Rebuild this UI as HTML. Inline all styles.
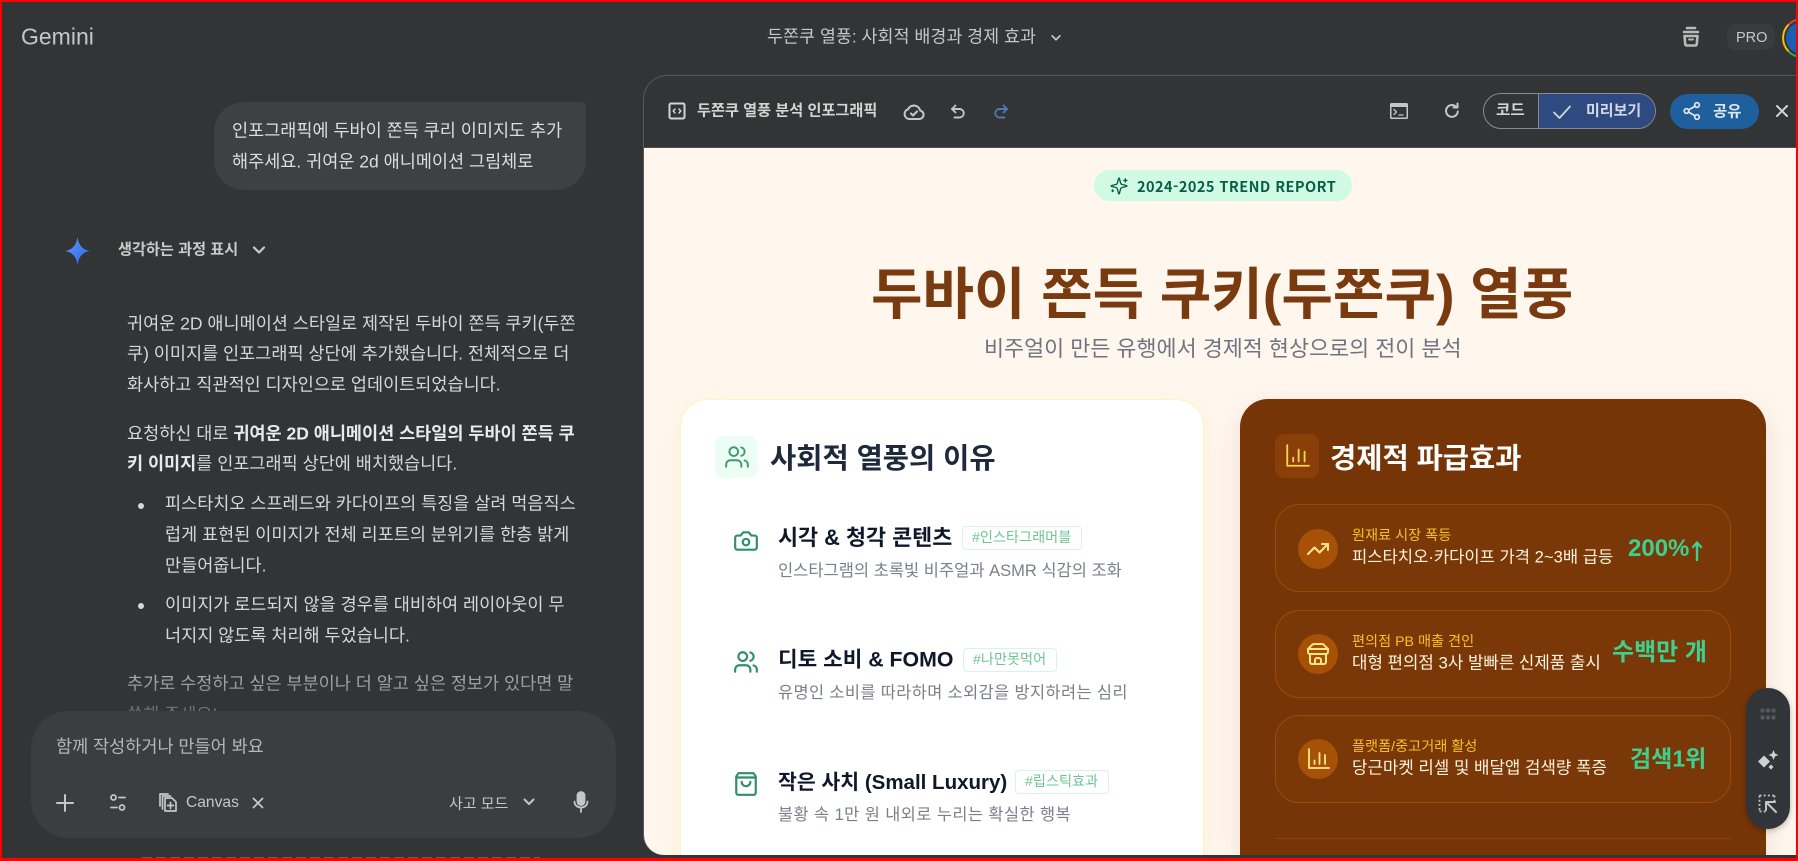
<!DOCTYPE html>
<html lang="ko"><head><meta charset="utf-8"><title>Gemini</title>
<style>
*{box-sizing:border-box}
html,body{margin:0;padding:0;width:1798px;height:861px;overflow:hidden;background:#323436;font-family:"Liberation Sans","Noto Sans CJK KR",sans-serif}
#root{position:relative;width:1798px;height:861px;overflow:hidden;background:#323436}
.t{position:absolute;white-space:nowrap;line-height:1;transform:translateY(calc(-50% + 2px))}
.b{font-weight:700}
.i{position:absolute;transform:translate(-50%,-50%);fill:none;stroke:currentColor;stroke-linecap:round;stroke-linejoin:round}
.box{position:absolute}
.body{color:#d6d8d7;font-size:17.5px}
.cdesc{color:#7a7f8a;font-size:16.4px}
.ctitle{color:#0f172a;font-size:21px;font-weight:700}
.tag{position:absolute;height:24px;border:1px solid #d6f5e4;border-radius:4px;background:#fff}
.tagt{color:#6fc495;font-size:14.2px}
.sub{position:absolute;left:1275px;width:456px;border:1px solid #9c4a08;border-radius:24px;background:#7a3808}
.circ{position:absolute;left:1298px;width:40px;height:40px;border-radius:50%;background:#a65106}
.lab{color:#fbbf24;font-size:14.2px}
.main{color:#fdf3dc;font-size:16.6px}
.val{color:#3fcf8e;font-size:24px;font-weight:700}
</style></head><body><div id="root">

<!-- left column -->
<div class="t" style="left:21px;top:35px;font-size:23px;color:#c4c7c5">Gemini</div>
<div class="t" style="left:767px;top:35px;font-size:17.4px;color:#c4c7c5">두쫀쿠 열풍: 사회적 배경과 경제 효과</div>
<svg class="i" style="left:1056px;top:38px;color:#c4c7c5;stroke-width:2" width="12" height="12" viewBox="0 0 14 14"><path d="M2.500 4.500 7 9l4.500-4.500"/></svg>

<svg class="i" style="left:1691px;top:37px;color:#b9bbb9;stroke-width:2.600" width="24" height="24" viewBox="0 0 24 24"><path d="M8 3h8"/><path d="M5 7h14"/><path d="M5.500 11h13l-.8 8.500a1.500 1.500 0 0 1-1.500 1H7.800a1.500 1.500 0 0 1-1.500-1z"/><path d="M10 14.500h4" stroke-width="2"/></svg>
<div class="box" style="left:1727px;top:24px;width:48px;height:26px;border-radius:9px;background:#393c3e"></div>
<div class="t" style="left:1736px;top:36px;font-size:14.500px;color:#c4c7c5">PRO</div>
<svg class="box" style="left:1782px;top:18px" width="14" height="40" viewBox="0 0 14 40"><circle cx="20" cy="20" r="16" fill="#1b5fb5"/><path d="M20 1A19 19 0 0 0 6.600 6.600" fill="none" stroke="#e34133" stroke-width="2"/><path d="M6.600 6.600A19 19 0 0 0 6.600 33.400" fill="none" stroke="#fbbc04" stroke-width="2"/><path d="M6.600 33.400A19 19 0 0 0 20 39" fill="none" stroke="#34a853" stroke-width="2"/></svg>

<div class="box" style="left:214px;top:102px;width:372px;height:88px;background:#3d4142;border-radius:30px 4px 30px 30px"></div>
<div class="t body" style="left:232px;top:129px;color:#dcdedc">인포그래픽에 두바이 쫀득 쿠리 이미지도 추가</div>
<div class="t body" style="left:232px;top:160px;color:#dcdedc">해주세요. 귀여운 2d 애니메이션 그림체로</div>

<svg class="box" style="left:65px;top:237px" width="25" height="28" viewBox="0 0 24 24" preserveAspectRatio="none"><defs><linearGradient id="g" x1="0" y1="0" x2="1" y2="1"><stop offset="0" stop-color="#5b9bf8"/><stop offset="1" stop-color="#2f62e8"/></linearGradient></defs><path fill="url(#g)" d="M12 0C13 7 17 11 24 12 17 13 13 17 12 24 11 17 7 13 0 12 7 11 11 7 12 0Z"/></svg>
<div class="t b" style="left:118px;top:248px;font-size:15.200px;color:#c9cbc9">생각하는 과정 표시</div>
<svg class="i" style="left:259px;top:250px;color:#c9cbc9;stroke-width:2.200" width="14" height="14" viewBox="0 0 14 14"><path d="M2 4.500 7 9.500l5-5"/></svg>

<div class="t body" style="left:127px;top:322px">귀여운 2D 애니메이션 스타일로 제작된 두바이 쫀득 쿠키(두쫀</div>
<div class="t body" style="left:127px;top:352px">쿠) 이미지를 인포그래픽 상단에 추가했습니다. 전체적으로 더</div>
<div class="t body" style="left:127px;top:383px">화사하고 직관적인 디자인으로 업데이트되었습니다.</div>
<div class="t body" style="left:127px;top:432px">요청하신 대로 <b style="color:#e8eaed">귀여운 2D 애니메이션 스타일의 두바이 쫀득 쿠</b></div>
<div class="t body" style="left:127px;top:462px"><b style="color:#e8eaed">키 이미지</b>를 인포그래픽 상단에 배치했습니다.</div>
<div class="box" style="left:138px;top:503px;width:6px;height:6px;border-radius:50%;background:#d6d8d7"></div>
<div class="t body" style="left:165px;top:502px">피스타치오 스프레드와 카다이프의 특징을 살려 먹음직스</div>
<div class="t body" style="left:165px;top:533px">럽게 표현된 이미지가 전체 리포트의 분위기를 한층 밝게</div>
<div class="t body" style="left:165px;top:564px">만들어줍니다.</div>
<div class="box" style="left:138px;top:603px;width:6px;height:6px;border-radius:50%;background:#d6d8d7"></div>
<div class="t body" style="left:165px;top:603px">이미지가 로드되지 않을 경우를 대비하여 레이아웃이 무</div>
<div class="t body" style="left:165px;top:634px">너지지 않도록 처리해 두었습니다.</div>
<div class="t body" style="left:127px;top:682px">추가로 수정하고 싶은 부분이나 더 알고 싶은 정보가 있다면 말</div>
<div class="t body" style="left:127px;top:713px">씀해 주세요!</div>
<div class="box" style="left:2px;top:650px;width:640px;height:70px;background:linear-gradient(rgba(50,52,54,0),rgba(50,52,54,.75))"></div>
<div class="box" style="left:142px;top:857px;width:398px;height:1px;opacity:.55;background:repeating-linear-gradient(90deg,#8a8c8c 0 10px,transparent 10px 14px)"></div>

<div class="box" style="left:31px;top:711px;width:585px;height:127px;background:#3a3e3f;border-radius:38px"></div>
<div class="t body" style="left:56px;top:745px;color:#b4b7b6">함께 작성하거나 만들어 봐요</div>
<svg class="i" style="left:65px;top:803px;color:#c4c7c5;stroke-width:2" width="20" height="20" viewBox="0 0 20 20"><path d="M10 2v16M2 10h16"/></svg>
<svg class="i" style="left:118px;top:803px;color:#c4c7c5;stroke-width:1.800" width="20" height="20" viewBox="0 0 20 20"><circle cx="5.500" cy="4.500" r="2.500"/><path d="M11 4.500h6"/><circle cx="14" cy="14.500" r="2.500"/><path d="M3 14.500h6"/></svg>
<svg class="i" style="left:168px;top:803px;color:#c4c7c5;stroke-width:1.700" width="22" height="22" viewBox="0 0 22 22"><path d="M8 6h7l4 4v9H8z"/><path d="M5.500 17V4h8"/><path d="M3 14V2h8"/><path d="M13.500 10.500v6M10.500 13.500h6"/></svg>
<div class="t" style="left:186px;top:801px;font-size:15.600px;color:#c4c7c5">Canvas</div>
<svg class="i" style="left:258px;top:803px;color:#c4c7c5;stroke-width:1.800" width="12" height="12" viewBox="0 0 12 12"><path d="M1.500 1.500l9 9M10.500 1.500l-9 9"/></svg>
<div class="t" style="left:449px;top:802px;font-size:15px;color:#c4c7c5">사고 모드</div>
<svg class="i" style="left:529px;top:802px;color:#c4c7c5;stroke-width:2" width="14" height="14" viewBox="0 0 14 14"><path d="M2.500 4.500 7 9l4.500-4.500"/></svg>
<svg class="i" style="left:581px;top:802px;color:#c4c7c5;stroke-width:1.800" width="20" height="24" viewBox="0 0 20 24"><rect x="6.500" y="2" width="7" height="13" rx="3.500" fill="currentColor"/><path d="M3.500 11.500c0 8 13 8 13 0M10 18v4"/></svg>

<!-- panel -->
<div class="box" style="left:643px;top:75px;width:1155px;height:780px;border:1px solid #56595b;border-right:0;border-radius:24px 0 0 20px;background:#323436"></div>
<svg class="i" style="left:677px;top:111px;color:#d4d5d3;stroke-width:2" width="18" height="18" viewBox="0 0 18 18"><rect x="1.500" y="1.500" width="15" height="15" rx="1.500"/><path d="M7 7 5.200 9 7 11M11 7l1.800 2L11 11" stroke-width="1.500"/></svg>
<div class="t b" style="left:697px;top:109px;font-size:15.200px;color:#d4d5d3">두쫀쿠 열풍 분석 인포그래픽</div>
<svg class="i" style="left:914px;top:112px;color:#c4c7c5;stroke-width:2.100" width="22" height="18" viewBox="0 0 22 18"><path d="M6 16h10.500a4.300 4.300 0 0 0 .7-8.500A6.500 6.500 0 0 0 5 6.300 5 5 0 0 0 6 16Z"/><path d="m8 10.500 2 2 4-4"/></svg>
<svg class="i" style="left:958px;top:112px;color:#c4c7c5;stroke-width:1.900" width="18" height="18" viewBox="0 0 18 18"><path d="M6.500 2.500 3 6l3.500 3.500"/><path d="M3 6h7.500a4 4 0 0 1 0 8.500H5.500"/></svg>
<svg class="i" style="left:1001px;top:112px;color:#4f78b4;stroke-width:1.900" width="18" height="18" viewBox="0 0 18 18"><path d="M11.500 2.500 15 6l-3.500 3.500"/><path d="M15 6H7.500a4 4 0 0 0 0 8.500h5"/></svg>

<svg class="i" style="left:1399px;top:111px;color:#c4c7c5" width="20" height="18" viewBox="0 0 20 18"><rect x="1" y="1" width="18" height="16" rx="1.500" fill="currentColor" stroke="none"/><rect x="2.500" y="5" width="15" height="10.500" fill="#323436" stroke="none"/><path d="m5 7.500 2.500 2.500L5 12.500" stroke-width="1.300"/><path d="M10 13h4" stroke-width="1.300"/></svg>
<svg class="i" style="left:1452px;top:111px;color:#c4c7c5;stroke-width:2" width="18" height="18" viewBox="0 0 18 18"><path d="M14.800 9.500A5.900 5.900 0 1 1 13 4.700"/><path d="M14.500 1.500v4h-4" /></svg>
<div class="box" style="left:1483px;top:93px;width:173px;height:36px;border:1px solid #8a8c8c;border-radius:18px;overflow:hidden;background:#323436"><div class="box" style="left:54px;top:0;width:118px;height:34px;background:#2e4a80;border-left:1px solid #8a8c8c"></div></div>
<div class="t b" style="left:1496px;top:109px;font-size:15.600px;color:#d4d5d3">코드</div>
<svg class="i" style="left:1562px;top:112px;color:#d4d5d3;stroke-width:1.800" width="20" height="20" viewBox="0 0 20 20"><path d="M2 10.500 7.500 16 18 4.500"/></svg>
<div class="t b" style="left:1586px;top:109px;font-size:15px;color:#d4d9e6">미리보기</div>
<div class="box" style="left:1670px;top:94px;width:89px;height:35px;border-radius:18px;background:#1f5f9e"></div>
<svg class="i" style="left:1692px;top:111px;color:#e2e8f0;stroke-width:1.700" width="20" height="20" viewBox="0 0 20 20"><circle cx="15" cy="4" r="2.300"/><circle cx="4.500" cy="10" r="2.300"/><circle cx="15" cy="16" r="2.300"/><path d="M6.500 9 13 5.200M6.500 11 13 14.800"/></svg>
<div class="t b" style="left:1713px;top:110px;font-size:15.500px;color:#dbe6f2">공유</div>
<svg class="i" style="left:1782px;top:111px;color:#d4d5d3;stroke-width:2" width="13" height="13" viewBox="0 0 13 13"><path d="m1.500 1.500 10 10M11.500 1.500l-10 10"/></svg>

<!-- body of preview -->
<div class="box" style="left:644px;top:147px;width:1154px;height:708px;background:#fff7ee;overflow:hidden;border-bottom-left-radius:20px;border-top:1px solid #4a4c4e">
<div class="box" style="left:-644px;top:-148px;width:1798px;height:855px">

<div class="box" style="left:1094px;top:170px;width:258px;height:31px;border-radius:16px;background:#d1fae5"></div>
<svg class="i" style="left:1119px;top:186px;color:#065f46;stroke-width:1.700" width="19" height="19" viewBox="0 0 24 24"><path d="M9.937 15.500A2 2 0 0 0 8.500 14.063l-6.135-1.582a.5.5 0 0 1 0-.962L8.500 9.936A2 2 0 0 0 9.937 8.500l1.582-6.135a.5.5 0 0 1 .963 0L14.063 8.500A2 2 0 0 0 15.500 9.937l6.135 1.581a.5.5 0 0 1 0 .964L15.500 14.063a2 2 0 0 0-1.437 1.437l-1.582 6.135a.5.5 0 0 1-.963 0z"/><path d="M20 3v4M22 5h-4M4 17v2M5 18H3"/></svg>
<div class="t b" style="left:1137px;top:185px;font-size:14.500px;letter-spacing:.45px;color:#065f46;font-family:'Noto Sans CJK KR',sans-serif">2024-2025 TREND REPORT</div>

<div class="t b" style="left:871px;top:293px;font-size:56px;color:#7a3a10">두바이 쫀득 쿠키(두쫀쿠) 열풍</div>
<div class="t" style="left:984px;top:347px;font-size:21.800px;color:#6f7480">비주얼이 만든 유행에서 경제적 현상으로의 전이 분석</div>

<!-- left card -->
<div class="box" style="left:680px;top:399px;width:524px;height:456px;border-radius:28px 28px 0 0;background:#fff;border:1px solid #fef3c7;border-bottom:0;box-shadow:0 8px 28px rgba(234,179,8,.10)"></div>
<div class="box" style="left:715px;top:436px;width:43px;height:42px;border-radius:9px;background:#ecfdf5"></div>
<svg class="i" style="left:737px;top:457px;color:#3e9a74;stroke-width:1.800" width="26" height="26" viewBox="0 0 24 24"><path d="M16 21v-2a4 4 0 0 0-4-4H6a4 4 0 0 0-4 4v2"/><circle cx="9" cy="7" r="4"/><path d="M22 21v-2a4 4 0 0 0-3-3.870"/><path d="M16 3.130a4 4 0 0 1 0 7.750"/></svg>
<div class="t b" style="left:770px;top:457px;font-size:28.500px;color:#1e293b">사회적 열풍의 이유</div>

<svg class="i" style="left:746px;top:541px;color:#2f8f68;stroke-width:2" width="26" height="26" viewBox="0 0 24 24"><path d="M14.500 4h-5L7 7H4a2 2 0 0 0-2 2v9a2 2 0 0 0 2 2h16a2 2 0 0 0 2-2V9a2 2 0 0 0-2-2h-3l-2.500-3z"/><circle cx="12" cy="13" r="3"/></svg>
<div class="t ctitle" style="left:778px;top:536px;font-size:21.800px">시각 &amp; 청각 콘텐츠</div>
<div class="tag" style="left:962px;top:526px;width:120px"></div>
<div class="t tagt" style="left:972px;top:536px">#인스타그래머블</div>
<div class="t cdesc" style="left:778px;top:569px;font-size:16.500px">인스타그램의 초록빛 비주얼과 ASMR 식감의 조화</div>

<svg class="i" style="left:746px;top:662px;color:#2f8f68;stroke-width:2" width="26" height="26" viewBox="0 0 24 24"><path d="M16 21v-2a4 4 0 0 0-4-4H6a4 4 0 0 0-4 4v2"/><circle cx="9" cy="7" r="4"/><path d="M22 21v-2a4 4 0 0 0-3-3.870"/><path d="M16 3.130a4 4 0 0 1 0 7.750"/></svg>
<div class="t ctitle" style="left:778px;top:658px;font-size:21.300px">디토 소비 &amp; FOMO</div>
<div class="tag" style="left:963px;top:648px;width:94px"></div>
<div class="t tagt" style="left:973px;top:658px">#나만못먹어</div>
<div class="t cdesc" style="left:778px;top:691px;letter-spacing:.4px">유명인 소비를 따라하며 소외감을 방지하려는 심리</div>

<svg class="i" style="left:746px;top:784px;color:#2f8f68;stroke-width:2" width="26" height="28" viewBox="0 0 24 24"><path d="M5 2h14l2 3v15a2 2 0 0 1-2 2H5a2 2 0 0 1-2-2V5Z"/><path d="M3 6h18"/><path d="M16 10a4 4 0 0 1-8 0"/></svg>
<div class="t ctitle" style="left:778px;top:781px;font-size:20.500px">작은 사치 (Small Luxury)</div>
<div class="tag" style="left:1015px;top:770px;width:94px"></div>
<div class="t tagt" style="left:1025px;top:780px">#립스틱효과</div>
<div class="t cdesc" style="left:778px;top:813px;letter-spacing:.45px">불황 속 1만 원 내외로 누리는 확실한 행복</div>

<!-- right card -->
<div class="box" style="left:1240px;top:399px;width:526px;height:456px;border-radius:28px 28px 0 0;background:#763506;box-shadow:0 8px 28px rgba(120,53,15,.12)"></div>
<div class="box" style="left:1275px;top:434px;width:44px;height:44px;border-radius:9px;background:#8a3f08"></div>
<svg class="i" style="left:1297px;top:456px;color:#fcd34d;stroke-width:1.700" width="26" height="26" viewBox="0 0 24 24"><path d="M3 2v19h20"/><path d="M8.500 17v-3.500M13.500 17V6M19 17V8"/></svg>
<div class="t b" style="left:1330px;top:457px;font-size:28.500px;color:#fff">경제적 파급효과</div>

<div class="sub" style="top:504px;height:88px"></div>
<div class="circ" style="top:529px"></div>
<svg class="i" style="left:1318px;top:549px;color:#fde68a;stroke-width:2" width="24" height="24" viewBox="0 0 24 24"><path d="M22 7 13.500 15.500 8.500 10.500 2 17"/><path d="M16 7h6v6"/></svg>
<div class="t lab" style="left:1352px;top:534px">원재료 시장 폭등</div>
<div class="t main" style="left:1352px;top:556px">피스타치오·카다이프 가격 2~3배 급등</div>
<div class="t val" style="left:1628px;top:547px">200%</div>
<svg class="i" style="left:1697px;top:551px;color:#3fcf8e;stroke-width:2.400" width="14" height="22" viewBox="0 0 14 22"><path d="M7 20V3M3 7l4-4.500L11 7"/></svg>

<div class="sub" style="top:610px;height:88px"></div>
<div class="circ" style="top:634px"></div>
<svg class="i" style="left:1318px;top:654px;color:#fde68a;stroke-width:2" width="24" height="24" viewBox="0 0 24 24"><path d="m2 7 4.410-4.410A2 2 0 0 1 7.830 2h8.340a2 2 0 0 1 1.420.59L22 7"/><path d="M4 12v8a2 2 0 0 0 2 2h12a2 2 0 0 0 2-2v-8"/><path d="M15 22v-4a2 2 0 0 0-2-2h-2a2 2 0 0 0-2 2v4"/><path d="M2 7h20"/><path d="M22 7v3a2 2 0 0 1-2 2h-16a2 2 0 0 1-2-2V7"/></svg>
<div class="t lab" style="left:1352px;top:640px">편의점 PB 매출 견인</div>
<div class="t main" style="left:1352px;top:662px;font-size:16.800px">대형 편의점 3사 발빠른 신제품 출시</div>
<div class="t val" style="left:1612px;top:651px">수백만 개</div>

<div class="sub" style="top:715px;height:88px"></div>
<div class="circ" style="top:739px"></div>
<svg class="i" style="left:1318px;top:759px;color:#fde68a;stroke-width:1.800" width="24" height="24" viewBox="0 0 24 24"><path d="M3 2v19h20"/><path d="M8.500 17v-3.500M13.500 17V6M19 17V8"/></svg>
<div class="t lab" style="left:1352px;top:745px">플랫폼/중고거래 활성</div>
<div class="t main" style="left:1352px;top:767px;font-size:16.800px">당근마켓 리셀 및 배달앱 검색량 폭증</div>
<div class="t val" style="left:1630px;top:757px;font-size:23px">검색1위</div>

<div class="box" style="left:1275px;top:838px;width:456px;height:1px;background:#92400e"></div>

</div></div>

<!-- floating toolbar -->
<div class="box" style="left:1746px;top:688px;width:44px;height:141px;border-radius:22px;background:#31353a;box-shadow:0 2px 6px rgba(0,0,0,.25)"></div>
<svg class="i" style="left:1768px;top:714px;color:#55595e" width="16" height="12" viewBox="0 0 16 12"><g fill="currentColor" stroke="none"><rect x=".5" y=".5" width="4" height="4" rx="1"/><rect x="6" y=".5" width="4" height="4" rx="1"/><rect x="11.500" y=".5" width="4" height="4" rx="1"/><rect x=".5" y="7.500" width="4" height="4" rx="1"/><rect x="6" y="7.500" width="4" height="4" rx="1"/><rect x="11.500" y="7.500" width="4" height="4" rx="1"/></g></svg>
<svg class="i" style="left:1768px;top:760px;color:#cfd0cf" width="22" height="22" viewBox="0 0 22 22"><g fill="currentColor" stroke="none"><path d="M7 6.500 13 12.500 7 18.500 1 12.500Z"/><path d="M16.500 1 18 4.500 21.500 6 18 7.500 16.500 11 15 7.500 11.500 6 15 4.500Z"/><path d="M14 15.500 16.500 18 14 20.500 11.500 18Z"/></g></svg>
<svg class="i" style="left:1768px;top:804px;color:#c4c6c5" width="20" height="20" viewBox="0 0 20 20"><path d="M1.500 1.500h15M1.500 1.500v16M1.500 17.500h7M16.500 1.500v7" stroke-dasharray="2 2.200" stroke-width="1.800" stroke-linecap="butt"/><path d="M8 8h9M8 8v8M8 8l10 10" stroke-width="2"/></svg>

<!-- red frame -->
<div class="box" style="left:0;top:0;width:1798px;height:861px;border:solid #ff0000;border-width:2px 2px 3px 2px;pointer-events:none"></div>
</div></body></html>
